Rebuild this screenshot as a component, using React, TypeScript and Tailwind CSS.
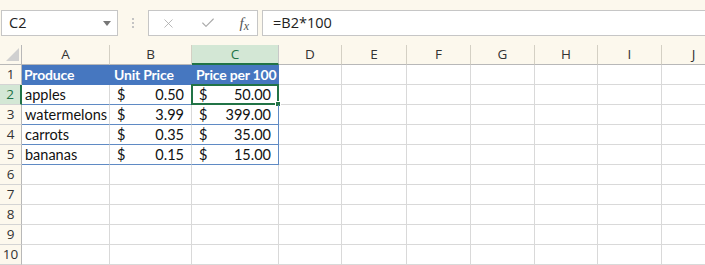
import { X, Check } from "lucide-react";

const letters = ["A", "B", "C", "D", "E", "F", "G", "H", "I", "J"];

const data = [
  { name: "apples", unit: "0.50", per: "50.00" },
  { name: "watermelons", unit: "3.99", per: "399.00" },
  { name: "carrots", unit: "0.35", per: "35.00" },
  { name: "bananas", unit: "0.15", per: "15.00" },
];

const cellFont = { fontFamily: "Lato, 'Open Sans', sans-serif" };
const uiFont = { fontFamily: "'Open Sans', 'Noto Sans', sans-serif" };

function Money({ value }: { value: string }) {
  return (
    <div className="flex justify-between pl-[7px] pr-[7px] leading-[19px] text-[14.5px] text-[#111] whitespace-nowrap">
      <span>$</span>
      <span>{value}</span>
    </div>
  );
}

export default function App() {
  const rows = Array.from({ length: 10 }, (_, i) => i + 1);

  return (
    <div className="w-[705px] h-[265px] overflow-hidden bg-[#fcf8ed]" style={uiFont}>
      {/* formula bar */}
      <div className="flex items-start h-[45px] pt-[10px] pl-[1px]">
        <div className="w-[117px] h-[26px] bg-white border border-[#c6c6c6] flex items-center justify-between pl-[7px] pr-[6px]">
          <span className="text-[14.5px] text-[#222]">C2</span>
          <svg width="8" height="5" viewBox="0 0 8 5">
            <path d="M0 0 L8 0 L4 5 Z" fill="#777" />
          </svg>
        </div>
        <div className="w-[30px] h-[26px] flex flex-col items-center justify-center gap-[2px]">
          <span className="w-[2px] h-[2px] bg-[#c4c4c4]" />
          <span className="w-[2px] h-[2px] bg-[#c4c4c4]" />
          <span className="w-[2px] h-[2px] bg-[#c4c4c4]" />
        </div>
        <div className="w-[110px] h-[26px] bg-white border border-[#c6c6c6] flex items-center pl-[12px] pr-[8px] justify-between">
          <X size={15} strokeWidth={1.3} color="#a9a9a9" />
          <Check size={16} strokeWidth={1.6} color="#a9a9a9" />
          <span className="text-[15px] italic text-[#555] leading-none" style={{ fontFamily: "'Liberation Serif', serif" }}>
            f<span className="text-[12px] relative top-[2px]">x</span>
          </span>
        </div>
        <div className="ml-[4px] flex-1 h-[26px] bg-white border-y border-l border-[#c6c6c6] flex items-center pl-[10px]">
          <span className="text-[14.5px] text-[#222]">=B2*100</span>
        </div>
      </div>

      {/* sheet */}
      <div className="grid grid-cols-[22px_88px_82px_87px_63px_65px_64px_64px_63px_64px_64px] bg-white">
        {/* column headers */}
        <div className="h-[20px] bg-[#fcf8ed] border-r border-b border-[#b8b8b8] flex items-end justify-end pr-[2px] pb-[3px]">
          <svg width="13" height="13" viewBox="0 0 13 13">
            <path d="M13 0 L13 13 L0 13 Z" fill="#d0d0d0" />
          </svg>
        </div>
        {letters.map((l) =>
          l === "C" ? (
            <div
              key={l}
              className="h-[20px] bg-[#d3e7d5] border-r border-[#c8c8c8] border-b-2 border-b-[#217346] flex items-center justify-center text-[13.5px] text-[#217346]"
            >
              {l}
            </div>
          ) : (
            <div
              key={l}
              className="h-[20px] bg-[#fcf8ed] border-r border-[#d4d0c4] border-b border-b-[#b8b8b8] flex items-center justify-center text-[13.5px] text-[#333]"
            >
              {l}
            </div>
          )
        )}

        {rows.map((r) => (
          <Row key={r} r={r} />
        ))}
      </div>
    </div>
  );
}

function Row({ r }: { r: number }) {
  const sel = r === 2;
  const rowHead = sel ? (
    <div className="h-[20px] bg-[#d3e7d5] border-r-2 border-[#217346] border-b border-b-[#d4d4d4] flex items-center justify-center text-[13.5px] text-[#217346]" style={uiFont}>
      {r}
    </div>
  ) : (
    <div className="h-[20px] bg-[#fcf8ed] border-r border-[#b8b8b8] border-b border-b-[#d4d4d4] flex items-center justify-center text-[13.5px] text-[#333]" style={uiFont}>
      {r}
    </div>
  );

  const empty = (k: string) => (
    <div key={k} className="h-[20px] border-r border-b border-[#d9d9d9]" />
  );
  const rest = ["D", "E", "F", "G", "H", "I", "J"].map((c) => empty(c + r));

  if (r === 1) {
    return (
      <>
        {rowHead}
        <div className="h-[20px] bg-[#4677c0] border-b border-[#4677c0] pl-[2px] leading-[19px] text-[14px] tracking-[-0.2px] font-bold text-white whitespace-nowrap" style={cellFont}>
          Produce
        </div>
        <div className="h-[20px] bg-[#4677c0] border-b border-[#4677c0] pl-[4px] leading-[19px] text-[14px] tracking-[-0.2px] font-bold text-white whitespace-nowrap" style={cellFont}>
          Unit Price
        </div>
        <div className="h-[20px] bg-[#4677c0] border-b border-[#4677c0] pl-[4px] leading-[19px] text-[14px] tracking-[-0.2px] font-bold text-white whitespace-nowrap overflow-hidden" style={cellFont}>
          Price per 100
        </div>
        {rest}
      </>
    );
  }

  if (r >= 2 && r <= 5) {
    const d = data[r - 2];
    return (
      <>
        {rowHead}
        <div className="h-[20px] border-r border-[#d9d9d9] border-b border-b-[#5f8ac4] pl-[3px] leading-[19px] text-[14.5px] text-[#111] whitespace-nowrap" style={cellFont}>
          {d.name}
        </div>
        <div className="h-[20px] border-r border-[#d9d9d9] border-b border-b-[#5f8ac4]" style={cellFont}>
          <Money value={d.unit} />
        </div>
        <div className="relative h-[20px] border-r border-[#5f8ac4] border-b border-b-[#5f8ac4]" style={cellFont}>
          <Money value={d.per} />
          {sel && (
            <div className="absolute -left-[1px] -top-[1px] -right-[1px] -bottom-[1px] border-2 border-[#217346]">
              <div className="absolute -right-[4px] -bottom-[4px] w-[6px] h-[6px] bg-[#217346] border border-white" />
            </div>
          )}
        </div>
        {rest}
      </>
    );
  }

  return (
    <>
      {rowHead}
      {empty("A" + r)}
      {empty("B" + r)}
      {empty("C" + r)}
      {rest}
    </>
  );
}
